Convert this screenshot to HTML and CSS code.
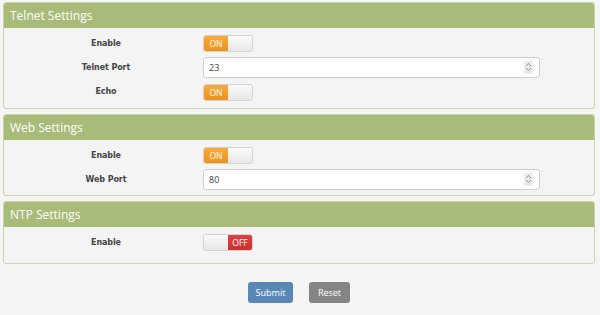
FILE: index.html
```html
<!DOCTYPE html>
<html>
<head>
<meta charset="utf-8">
<link rel="stylesheet" href="styles.css">
</head>
<body>
<div class="page">
  <section class="panel">
    <div class="panel-head">Telnet Settings</div>
    <div class="panel-body">
      <div class="row"><div class="label">Enable</div><div class="ctrl"><span class="toggle on"><span class="state">ON</span><span class="knob"></span></span></div></div>
      <div class="row"><div class="label">Telnet Port</div><div class="ctrl"><div class="num"><span class="val">23</span><span class="spin"><svg width="7" height="10" viewBox="0 0 7 10"><path d="M1 4 L3.5 1.5 L6 4 M1 6 L3.5 8.5 L6 6" fill="none" stroke="#8a8a8a" stroke-width="0.9"/></svg></span></div></div></div>
      <div class="row"><div class="label">Echo</div><div class="ctrl"><span class="toggle on"><span class="state">ON</span><span class="knob"></span></span></div></div>
    </div>
  </section>
  <section class="panel">
    <div class="panel-head">Web Settings</div>
    <div class="panel-body">
      <div class="row"><div class="label">Enable</div><div class="ctrl"><span class="toggle on"><span class="state">ON</span><span class="knob"></span></span></div></div>
      <div class="row"><div class="label">Web Port</div><div class="ctrl"><div class="num"><span class="val">80</span><span class="spin"><svg width="7" height="10" viewBox="0 0 7 10"><path d="M1 4 L3.5 1.5 L6 4 M1 6 L3.5 8.5 L6 6" fill="none" stroke="#8a8a8a" stroke-width="0.9"/></svg></span></div></div></div>
    </div>
  </section>
  <section class="panel last">
    <div class="panel-head">NTP Settings</div>
    <div class="panel-body">
      <div class="row"><div class="label">Enable</div><div class="ctrl"><span class="toggle off"><span class="knob"></span><span class="state">OFF</span></span></div></div>
    </div>
  </section>
  <div class="actions">
    <button class="btn submit">Submit</button>
    <button class="btn reset">Reset</button>
  </div>
</div>
</body>
</html>
```
FILE: styles.css
```css
* { box-sizing: border-box; }
html, body { margin: 0; padding: 0; background: #f5f5f5; }
body { font-family: "Liberation Sans", Arial, sans-serif; }
.page { padding: 2px 5px 0 3px; }
.panel {
  border: 1px solid #c8d5a4;
  border-radius: 3px;
  background: #f4f4f4;
  margin-bottom: 5px;
  overflow: hidden;
}
.panel.last { margin-bottom: 0; }
.panel-head {
  height: 25px;
  background: #a8bb79;
  color: #ffffff;
  font-family: "Open Sans", sans-serif;
  font-size: 12px;
  line-height: 25px;
  padding-left: 6px;
}
.panel-body { padding: 3px 0 4px 5px; }
.panel.last .panel-body { padding-bottom: 9px; }
.row { display: flex; align-items: center; height: 24px; }
.label {
  width: 194px;
  text-align: center;
  font-weight: bold;
  font-size: 8px;
  color: #444;
  font-family: "DejaVu Sans", sans-serif;
  letter-spacing: -0.1px;
}
.panel-body .row:nth-child(3) { height: 25px; }
.ctrl { flex: 0 0 337px; }
.toggle {
  display: inline-flex;
  width: 50px;
  height: 17px;
  border: 1px solid #d2d2d2;
  border-radius: 3px;
  overflow: hidden;
  vertical-align: middle;
}
.toggle .state {
  width: 25px;
  color: #fff;
  font-size: 8.5px;
  line-height: 15px;
  text-align: center;
  font-family: "Open Sans", sans-serif;
}
.toggle.on .state { background: linear-gradient(#f6aa3c, #ee921c); }
.toggle.off .state { background: linear-gradient(#dd4140, #cc2f2e); }
.toggle .knob {
  width: 25px;
  background: linear-gradient(#fbfbfb, #e7e7e7);
}
.num {
  height: 21px;
  background: #fff;
  border: 1px solid #cfcfcf;
  border-radius: 3px;
  display: flex;
  align-items: center;
  justify-content: space-between;
  padding: 0 6px 0 5px;
}
.num .val {
  font-family: "Open Sans", sans-serif;
  font-size: 9px;
  color: #444;
}
.spin {
  width: 9px;
  height: 13px;
  background: #eaeaea;
  border-radius: 2px;
  display: flex;
  align-items: center;
  justify-content: center;
}
.actions {
  display: flex;
  justify-content: center;
  gap: 16px;
  padding-top: 18px;
}
.btn {
  border: none;
  border-radius: 3px;
  height: 21px;
  color: #fff;
  font-family: "Open Sans", sans-serif;
  font-size: 9px;
  padding: 0;
}
.submit { width: 45px; background: #5a88b6; }
.reset { width: 41px; background: #858585; }
```
